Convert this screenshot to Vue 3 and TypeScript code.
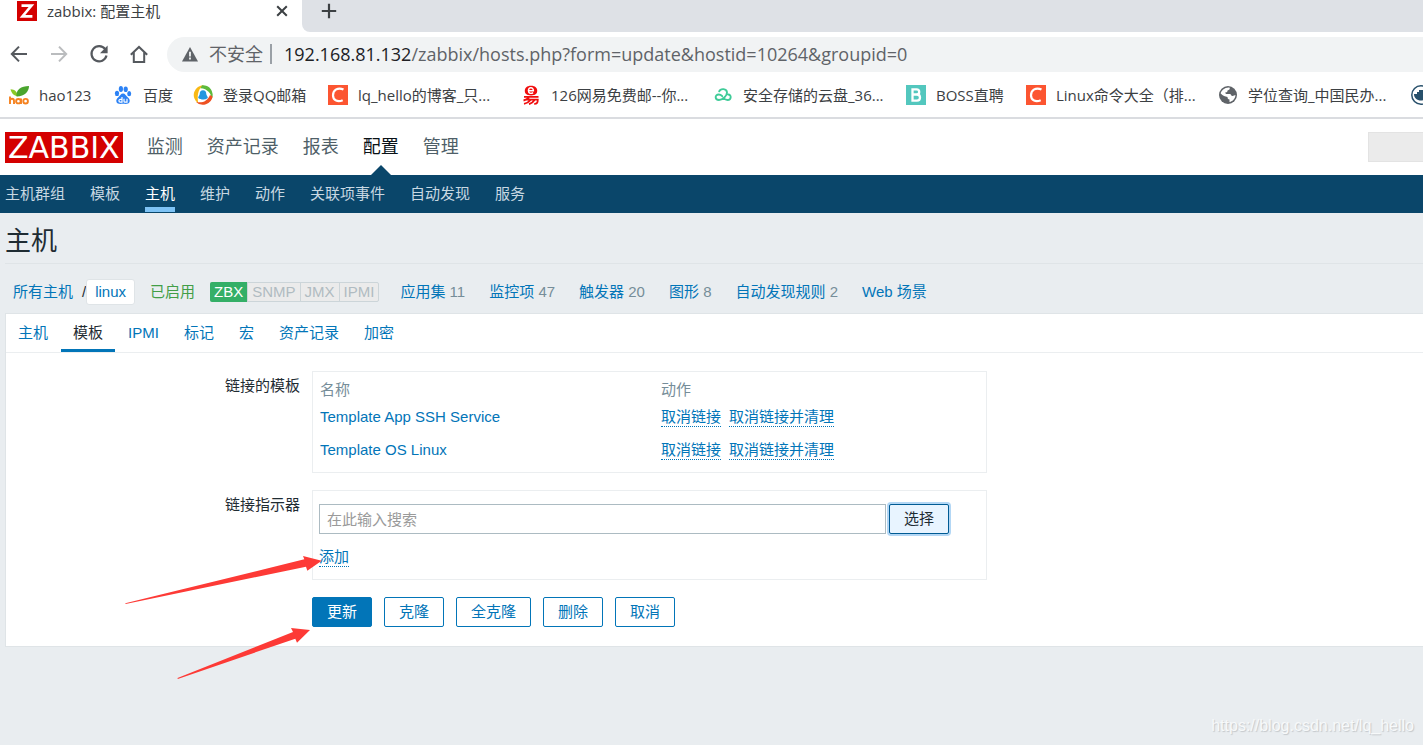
<script setup lang="ts">
import { ref } from 'vue'

interface Bookmark {
  icon: string
  label: string
  width: number
}

interface Counter {
  label: string
  count?: number
}

const bookmarks: Bookmark[] = [
  { icon: 'hao', label: 'hao123', width: 104 },
  { icon: 'baidu', label: '百度', width: 80 },
  { icon: 'qq', label: '登录QQ邮箱', width: 135 },
  { icon: 'csdn', label: 'lq_hello的博客_只...', width: 193 },
  { icon: 'mail', label: '126网易免费邮--你...', width: 192 },
  { icon: 'cloud', label: '安全存储的云盘_36...', width: 193 },
  { icon: 'boss', label: 'BOSS直聘', width: 120 },
  { icon: 'csdn', label: 'Linux命令大全（排...', width: 192 },
  { icon: 'globe', label: '学位查询_中国民办...', width: 193 },
  { icon: 'docker', label: '', width: 20 },
]
const mainMenu: string[] = ['监测', '资产记录', '报表', '配置', '管理']
const subMenu: string[] = ['主机群组', '模板', '主机', '维护', '动作', '关联项事件', '自动发现', '服务']
const interfaces: string[] = ['ZBX', 'SNMP', 'JMX', 'IPMI']
const counters: Counter[] = [
  { label: '应用集', count: 11 },
  { label: '监控项', count: 47 },
  { label: '触发器', count: 20 },
  { label: '图形', count: 8 },
  { label: '自动发现规则', count: 2 },
  { label: 'Web 场景' },
]
const tabs: string[] = ['主机', '模板', 'IPMI', '标记', '宏', '资产记录', '加密']
const templates: string[] = ['Template App SSH Service', 'Template OS Linux']
const secondaryActions: string[] = ['克隆', '全克隆', '删除', '取消']

const activeTab = ref('模板')
const search = ref('')
</script>

<template>
  <div class="screen">
    <div class="browser">
      <div class="tabstrip">
        <div class="browser-tab">
          <svg class="favicon" viewBox="0 0 20 20"><path fill="#d40000" d="M0 0h20v20H0z" /><path fill="none" stroke="#fff" stroke-width="2.6" d="M4.5 4.6h10L5.4 15.4h10" /></svg>
          <span class="tab-title">zabbix: 配置主机</span>
          <button class="icon-button" type="button" aria-label="关闭">
            <svg width="12" height="12" viewBox="0 0 12 12"><path fill="none" stroke="#3c4043" stroke-width="2" d="M1.2 1.2l9.6 9.6M10.8 1.2l-9.6 9.6" /></svg>
          </button>
        </div>
        <div class="strip-rest">
          <button class="icon-button" type="button" aria-label="新标签页">
            <svg width="16" height="16" viewBox="0 0 16 16"><path fill="none" stroke="#3c4043" stroke-width="2.2" d="M8 .8v14.4M.8 8h14.4" /></svg>
          </button>
        </div>
      </div>

      <div class="toolbar">
        <button class="icon-button" type="button" aria-label="后退">
          <svg width="20" height="20" viewBox="0 0 20 20"><path fill="none" stroke="#55595e" stroke-width="2" d="M18 10H3M10 2.6L2.8 10l7.2 7.4" /></svg>
        </button>
        <button class="icon-button" type="button" aria-label="前进">
          <svg width="20" height="20" viewBox="0 0 20 20"><path fill="none" stroke="#babcbe" stroke-width="2" d="M2 10h15M10 2.6l7.2 7.4-7.2 7.4" /></svg>
        </button>
        <button class="icon-button" type="button" aria-label="刷新">
          <svg width="20" height="20" viewBox="0 0 20 20"><path fill="none" stroke="#55595e" stroke-width="2.2" d="M16.2 5.2A7.6 7.6 0 1 0 17.5 11.6" /><path fill="#55595e" d="M18.6 1.6v7.6H11z" /></svg>
        </button>
        <button class="icon-button" type="button" aria-label="主页">
          <svg width="20" height="20" viewBox="0 0 20 20"><path fill="none" stroke="#55595e" stroke-width="2" d="M1.8 10.8L10 3l8.200 7.800M4.800 8.600v9.300h10.400V8.600" /></svg>
        </button>
        <div class="omnibox">
          <svg width="16" height="16" viewBox="0 0 16 16"><path fill="#5f6368" d="M8 1l8 14.4H0z" /><path stroke="#f1f3f4" stroke-width="1.8" d="M8 5.8v4.6M8 11.6v1.9" /></svg>
          <span class="insecure">不安全</span>
          <span class="divider"></span>
          <span class="url"><span class="host">192.168.81.132</span>/zabbix/hosts.php?form=update&amp;hostid=10264&amp;groupid=0</span>
        </div>
      </div>

      <nav class="bookmarks">
        <a v-for="(b, i) in bookmarks" :key="i" href="#" class="bookmark" :style="{ width: b.width + 'px' }" :aria-label="b.label || 'Docker'">
          <svg v-if="b.icon === 'hao'" class="favicon" viewBox="0 0 20 20">
            <path fill="#8bc926" d="M1.500 4.300C6 4.500 8 6.500 8.600 11.200 5 11 2.600 8.500 1.500 4.300z" /><path fill="#4aa52e" d="M7.600 11.500C6.500 4.500 12 1.200 20 1c0 5-4 10.500-12.400 10.500z" />
            <path fill="none" stroke="#f58220" stroke-width="1.900" d="M1 11.500v7.500M1 16c0-3 4-3 4 0v3" /><ellipse cx="9.400" cy="16.200" rx="2.300" ry="2.200" fill="none" stroke="#f58220" stroke-width="1.900" /><path stroke="#f58220" stroke-width="1.900" d="M12 13.500v5.500" /><circle cx="16.600" cy="16.200" r="2.300" fill="none" stroke="#f58220" stroke-width="1.900" />
          </svg>
          <svg v-else-if="b.icon === 'baidu'" class="favicon" viewBox="0 0 20 20">
            <g fill="#2c82f5"><ellipse cx="4" cy="8.400" rx="2.100" ry="2.700" /><ellipse cx="7.900" cy="4" rx="2.100" ry="2.900" /><ellipse cx="12.700" cy="4.300" rx="2.100" ry="2.800" /><ellipse cx="16.200" cy="8.700" rx="2" ry="2.600" /><path d="M10 8.400c2.100 0 2.800 2 4.200 3.400 2 1.800 3 3.200 2.300 5.200-.8 2.200-3.300 2-6.500 1.800-3.200.2-5.700.4-6.500-1.800-.7-2 .3-3.400 2.300-5.200C7.200 10.400 7.900 8.400 10 8.400z" /></g>
            <path fill="none" stroke="#fff" stroke-width="1.200" d="M9 12v5.200H7.400c-2 0-2-2.800 0-2.800H9M11 13.800v2.400q0 1 1 1h2v-3.400" />
          </svg>
          <svg v-else-if="b.icon === 'qq'" class="favicon" viewBox="0 0 20 20">
            <circle cx="10" cy="10" r="9.600" fill="#fff" />
            <path fill="#f9b915" d="M5.200 18.300A9.800 9.800 0 0 1 11 .3C6.500 2.500 3.500 8 5.200 18.300z" /><path fill="#5dba3c" d="M9 .2A9.800 9.800 0 0 1 18.800 14C18.300 8.500 14.500 3.600 7.500 3.200z" /><path fill="#ee5122" d="M19.600 11.500A9.800 9.800 0 0 1 3 16.900C9 18.300 14.500 16.500 17 10z" />
            <path fill="#2196e0" d="M10 5.200c2.200 0 3.300 1.600 3.300 3.700 0 1.400 1.700 2.600 1.500 4.300-1.200-.2-1.300 1.300-4.800 1.300s-3.600-1.500-4.800-1.300c-.2-1.700 1.500-2.900 1.500-4.300 0-2.100 1.100-3.700 3.300-3.700z" />
          </svg>
          <svg v-else-if="b.icon === 'csdn'" class="favicon" viewBox="0 0 20 20"><path fill="#fc5531" d="M0 0h20v20H0z" /><path fill="none" stroke="#fff" stroke-width="2.200" d="M15.500 4.600C10 1.800 5 5 5 10.300c0 5.500 5 7 9.700 4.900" /></svg>
          <svg v-else-if="b.icon === 'mail'" class="favicon" viewBox="0 0 20 20">
            <path fill="#f00d0d" d="M10 .8c4.200 0 6.200 2.300 6.200 5s-1.700 4.700-6.200 4.700-6.200-2-6.200-4.700S5.800.8 10 .8z" /><path fill="none" stroke="#fff" stroke-width="1.400" d="M7.600 5.800h4.800c0-4.200-5-3.800-5 0 0 2.800 2.800 3.100 4.700 1.800" />
            <path fill="none" stroke="#f00d0d" stroke-width="1.800" d="M3 11.800h14.500M8 12.500C6.500 14 5 15 2.500 15.500M5.500 14.600h11.300c0 3-.8 4.400-3.600 4.300M9.500 15c-1.500 2-3.500 3.200-6.500 3.800M13.500 15c-1.200 2-2.500 3.300-5.500 4.200" />
          </svg>
          <svg v-else-if="b.icon === 'cloud'" class="favicon" viewBox="0 0 20 20"><path fill="none" stroke="#3fcb98" stroke-width="1.900" stroke-linecap="round" d="M6.200 6.300C7.500 3.300 13.800 3.200 14 7.500c.1 3.200-4.500 7.500-8 7.500-4.400 0-4.400-5.500-.3-5.500 1.600 0 2.600.7 3.500 1.700M10.600 13.200c1.200 1.200 2.400 1.800 4 1.800 4 0 4-5.500.6-5.500" /></svg>
          <svg v-else-if="b.icon === 'boss'" class="favicon" viewBox="0 0 20 20"><path fill="#53c7be" d="M0 0h20v20H0z" /><path fill="none" stroke="#fff" stroke-width="2.300" d="M6.500 4.300h4c3.600 0 3.600 5.200 0 5.200h-4h4.500c4 0 4 6.200 0 6.200H6.500zM6.500 3.200v13.600" /></svg>
          <svg v-else-if="b.icon === 'globe'" class="favicon" viewBox="0 0 20 20"><circle cx="10" cy="10" r="9" fill="#5f6368" /><path fill="#fff" d="M11.500 2.500c1 1.500-.5 2.500-2 3 .2 1.500-1 2-2.500 2l1 1.500h4c1 0 1 2 2.500 2 1.200 0 2-1 3-1-.3 3.500-2.500 6.300-6 7v-2.500c-1.500 0-2-1-2-2.500-2.500-.5-4.500-1-6.800-3.500C3 5.500 7 2 11.500 2.500z" /></svg>
          <svg v-else class="favicon" viewBox="0 0 20 20"><circle cx="10" cy="10" r="9.200" fill="#fff" stroke="#28506b" stroke-width="1.500" /><path fill="#28506b" d="M3 9h3V7h2V5h4v4h5c0 4-3 6.500-7 6.500S3 13 3 9z" /></svg>
          <span v-if="b.label">{{ b.label }}</span>
        </a>
      </nav>
    </div>

    <header class="header">
      <a href="#" class="logo">ZABBIX</a>
      <nav class="main-menu">
        <a v-for="m in mainMenu" :key="m" href="#" :class="{ selected: m === '配置' }">{{ m }}</a>
      </nav>
      <input class="global-search" type="text" aria-label="搜索">
    </header>
    <nav class="sub-menu">
      <a v-for="m in subMenu" :key="m" href="#" :class="{ selected: m === '主机' }">{{ m }}</a>
    </nav>

    <main class="content">
      <h1>主机</h1>
      <div class="object-bar">
        <span class="crumbs"><a href="#">所有主机</a><span class="slash">/</span><a href="#" class="current">linux</a></span>
        <span class="enabled">已启用</span>
        <span class="interfaces"><span v-for="n in interfaces" :key="n" :class="{ on: n === 'ZBX' }">{{ n }}</span></span>
        <span class="counters">
          <span v-for="c in counters" :key="c.label"><a href="#">{{ c.label }}</a><template v-if="c.count">&nbsp;{{ c.count }}</template></span>
        </span>
      </div>

      <form class="panel" @submit.prevent>
        <div class="tabs" role="tablist">
          <button v-for="t in tabs" :key="t" type="button" role="tab" :aria-selected="activeTab === t" :class="{ active: activeTab === t }" @click="activeTab = t">{{ t }}</button>
        </div>
        <div class="form-grid">
          <span id="linked" class="label">链接的模板</span>
          <div class="box">
            <table aria-labelledby="linked">
              <thead><tr><th>名称</th><th>动作</th></tr></thead>
              <tbody>
                <tr v-for="t in templates" :key="t">
                  <td><a href="#">{{ t }}</a></td>
                  <td><span class="row-actions"><button type="button" class="dotted">取消链接</button><button type="button" class="dotted">取消链接并清理</button></span></td>
                </tr>
              </tbody>
            </table>
          </div>
          <label class="label" for="indicator">链接指示器</label>
          <div class="box picker">
            <div class="picker-row">
              <input id="indicator" v-model="search" type="text" placeholder="在此输入搜索">
              <button type="button" class="btn focused">选择</button>
            </div>
            <button type="button" class="dotted">添加</button>
          </div>
          <div class="actions">
            <button type="submit" class="btn primary">更新</button>
            <button v-for="a in secondaryActions" :key="a" type="button" class="btn">{{ a }}</button>
          </div>
        </div>
      </form>
    </main>

    <svg class="arrows" width="330" height="690" viewBox="0 0 330 690" aria-hidden="true">
      <path fill="#fd3a36" d="M125.300 603.200L304.300 559.300 303 556l18.700 4.700-14.400 10-1.300-4L125.600 604z" />
      <path fill="#fd3a36" d="M177.500 678L293 632l-2-4 19 2-13 12.700-1.700-4L177.800 679z" />
    </svg>
    <span class="watermark">https://blog.csdn.net/lq_hello</span>
  </div>
</template>

<style>
body {
  margin: 0;
  background: #e9edf0;
}
</style>

<style scoped>
* {
  box-sizing: border-box;
}

.screen {
  position: relative;
  min-height: 100vh;
  overflow: hidden;
  background: #e9edf0;
  color: #1f2c33;
  font: 15px/20px "Liberation Sans", "Noto Sans CJK SC", sans-serif;
}

a {
  color: #0275b8;
  text-decoration: none;
  white-space: nowrap;
}

button,
input {
  font: inherit;
}

button {
  margin: 0;
  padding: 0;
  border: 0;
  background: none;
  white-space: nowrap;
}

.browser {
  border-bottom: 2px solid #dadce0;
  background: #fff;
  color: #3c4043;
  font-family: "Open Sans", "Noto Sans CJK SC", sans-serif;
}

.icon-button {
  display: flex;
}

.favicon {
  flex: none;
  width: 20px;
  height: 20px;
}

.tabstrip {
  display: flex;
  height: 32px;
}

.browser-tab {
  display: flex;
  align-items: center;
  gap: 10px;
  width: 302px;
  padding: 0 14px 10px 17px;
}

.tab-title {
  flex: 1;
}

.strip-rest {
  flex: 1;
  padding: 3px 19px;
  border-bottom-left-radius: 8px;
  background: #dee1e6;
}

.toolbar {
  display: flex;
  align-items: center;
  gap: 20px;
  height: 44px;
  padding-left: 9px;
}

.omnibox {
  display: flex;
  flex: 1;
  align-items: center;
  height: 35px;
  margin-left: -2px;
  padding-left: 15px;
  border-radius: 18px 0 0 18px;
  background: #f1f3f4;
  color: #5f6368;
  font-size: 18px;
}

.insecure {
  margin-left: 11px;
}

.divider {
  width: 2px;
  height: 20px;
  margin: 0 12px 0 7px;
  background: #9aa0a6;
}

.url {
  white-space: nowrap;
}

.host {
  color: #202124;
}

.bookmarks {
  display: flex;
  align-items: center;
  height: 41px;
  padding: 0 0 3px 9px;
}

.bookmark {
  display: flex;
  flex: none;
  align-items: center;
  gap: 10px;
  color: #3c4043;
}

.header {
  display: flex;
  align-items: center;
  height: 56px;
  padding-left: 5px;
  background: #fff;
}

.logo {
  padding: 0 3px;
  background: #d40000;
  color: #fff;
  font-family: "DejaVu Sans", sans-serif;
  font-size: 30px;
  line-height: 31px;
}

.main-menu {
  display: flex;
  flex: 1;
  align-self: stretch;
  gap: 24px;
  margin-left: 24px;
}

.main-menu a {
  position: relative;
  display: flex;
  align-items: center;
  color: #4f5f68;
  font-size: 18px;
}

.main-menu .selected {
  color: #0a1217;
}

.main-menu .selected::after {
  position: absolute;
  bottom: 0;
  left: 50%;
  border: solid transparent;
  border-width: 0 10px 10px;
  border-bottom-color: #0a466a;
  content: "";
  transform: translateX(-50%);
}

.global-search {
  width: 55px;
  height: 30px;
  border: 1px solid #e3e3e3;
  border-right: 0;
  background: #ebebeb;
}

.sub-menu {
  display: flex;
  gap: 25px;
  height: 38px;
  padding: 0 5px 1px;
  background: #0a466a;
}

.sub-menu a {
  padding-top: 9px;
  border-bottom: 5px solid transparent;
  color: #c8d8e2;
}

.sub-menu .selected {
  border-color: #7ec3f5;
  color: #fff;
}

.content {
  padding-left: 5px;
}

h1 {
  height: 51px;
  margin: 0;
  padding-top: 12px;
  border-bottom: 1px solid #dfe4e7;
  font-size: 26px;
  font-weight: 400;
  line-height: 32px;
}

.object-bar {
  display: flex;
  align-items: center;
  height: 49px;
  padding: 7px 0 0 8px;
}

.crumbs {
  display: flex;
  align-items: center;
  color: #1f2c33;
}

.slash {
  padding-left: 9px;
}

.current {
  padding: 2px 8px;
  border: 1px solid #dfe4e7;
  border-radius: 3px;
  background: #fff;
}

.enabled {
  margin: 0 15px;
  color: #429e47;
}

.interfaces {
  display: flex;
  border: 1px solid #ccd5d9;
  border-radius: 2px;
  background: #ebebeb;
  color: #b0bbc1;
  line-height: 18px;
}

.interfaces span {
  padding: 0 4px;
  border-left: 1px solid #ccd5d9;
}

.interfaces .on {
  margin: -1px 0 -1px -1px;
  padding: 1px 4px;
  border: 0;
  border-radius: 2px 0 0 2px;
  background: #34af67;
  color: #fff;
}

.counters {
  display: flex;
  gap: 24px;
  margin-left: 21px;
  color: #768d99;
  white-space: nowrap;
}

.panel {
  padding-bottom: 19px;
  border: 1px solid #dfe4e7;
  border-right: 0;
  background: #fff;
}

.tabs {
  display: flex;
  gap: 1px;
  height: 39px;
  border-bottom: 1px solid #ebeef0;
}

.tabs button {
  padding: 0 12px;
  border-top: 3px solid transparent;
  border-bottom: 3px solid transparent;
  color: #0275b8;
}

.tabs .active {
  border-bottom-color: #0275b8;
  color: #1f2c33;
}

.form-grid {
  display: grid;
  grid-template-columns: 294px minmax(0, 675px);
  gap: 17px 12px;
  padding-top: 18px;
}

.label {
  padding-top: 5px;
  text-align: right;
}

.box {
  border: 1px solid #ebeef0;
}

table {
  width: 100%;
  margin-bottom: 6px;
  border-collapse: collapse;
  table-layout: fixed;
}

th {
  width: 50%;
  height: 28px;
  padding: 7px 0 0 7px;
  color: #768d99;
  font-weight: 400;
  text-align: left;
}

th:first-child {
  width: 341px;
}

td {
  height: 33px;
  padding: 0 0 0 7px;
}

.row-actions {
  display: flex;
  gap: 8px;
}

.dotted {
  border-bottom: 1px dotted #0275b8;
  color: #0275b8;
  line-height: 19px;
}

.picker {
  padding: 13px 37px 12px 6px;
}

.picker-row {
  display: flex;
  gap: 3px;
  margin-bottom: 13px;
}

.picker-row input {
  flex: 1;
  min-width: 0;
  height: 30px;
  padding: 0 7px;
  border: 1px solid #acbbc2;
  background: #fff;
}

.picker-row input::placeholder {
  color: #9a9a9a;
  opacity: 1;
}

.btn {
  height: 30px;
  padding: 0 14px;
  border: 1px solid #0275b8;
  border-radius: 2px;
  background: #fff;
  color: #0275b8;
}

.primary {
  background: #0275b8;
  color: #fff;
}

.focused {
  border-color: #005b94;
  background: #e8f4ff;
  box-shadow: 0 0 0 2px #b3d7f5;
  color: #1f2c33;
}

.actions {
  display: flex;
  grid-column: 2;
  gap: 12px;
}

.arrows {
  position: absolute;
  top: 0;
  left: 0;
  pointer-events: none;
}

.watermark {
  position: absolute;
  right: 9px;
  bottom: 9px;
  color: #f7f9fa;
  font-size: 16px;
  text-shadow: 1px 1px 1px #c3c7ca;
}
</style>
